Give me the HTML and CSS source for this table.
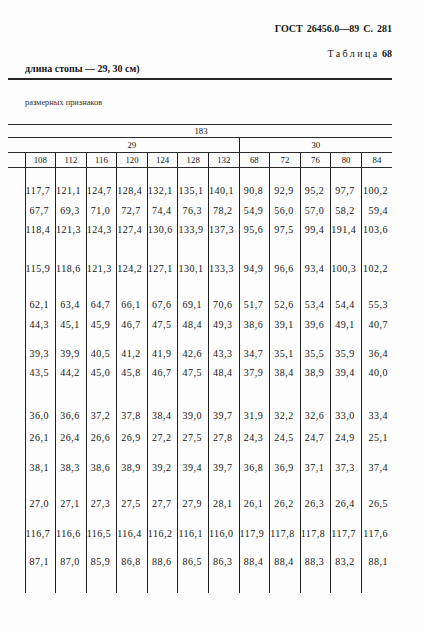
FILE: index.html
```html
<!DOCTYPE html>
<html lang="ru">
<head>
<meta charset="utf-8">
<title>ГОСТ 26456.0—89 С. 281</title>
<link rel="stylesheet" href="styles.css">
</head>
<body>
<div class="page">
  <div class="runhead">ГОСТ 26456.0—89 С. 281</div>
  <div class="tabnum"><span class="spaced">Таблица</span> <b>68</b></div>
  <div class="caption">длина стопы — 29, 30 см)</div>
  <div class="rule"></div>
  <div class="subcap">размерных признаков</div>
  <table class="data">
    <colgroup>
      <col class="labelcol">
      <col><col><col><col><col><col><col><col><col><col><col><col>
    </colgroup>
    <thead>
      <tr class="h1"><th colspan="13">183</th></tr>
      <tr class="h2"><th colspan="8">29</th><th colspan="5" class="sep">30</th></tr>
      <tr class="h3"><th class="lab"></th><th>108</th><th>112</th><th>116</th><th>120</th><th>124</th><th>128</th><th>132</th><th>68</th><th>72</th><th>76</th><th>80</th><th>84</th></tr>
    </thead>
    <tbody>
      <tr><td class="lab"></td><td>117,7</td><td>121,1</td><td>124,7</td><td>128,4</td><td>132,1</td><td>135,1</td><td>140,1</td><td>90,8</td><td>92,9</td><td>95,2</td><td>97,7</td><td>100,2</td></tr>
      <tr><td class="lab"></td><td>67,7</td><td>69,3</td><td>71,0</td><td>72,7</td><td>74,4</td><td>76,3</td><td>78,2</td><td>54,9</td><td>56,0</td><td>57,0</td><td>58,2</td><td>59,4</td></tr>
      <tr><td class="lab"></td><td>118,4</td><td>121,3</td><td>124,3</td><td>127,4</td><td>130,6</td><td>133,9</td><td>137,3</td><td>95,6</td><td>97,5</td><td>99,4</td><td>191,4</td><td>103,6</td></tr>
      <tr><td class="lab"></td><td>115,9</td><td>118,6</td><td>121,3</td><td>124,2</td><td>127,1</td><td>130,1</td><td>133,3</td><td>94,9</td><td>96,6</td><td>93,4</td><td>100,3</td><td>102,2</td></tr>
      <tr><td class="lab"></td><td>62,1</td><td>63,4</td><td>64,7</td><td>66,1</td><td>67,6</td><td>69,1</td><td>70,6</td><td>51,7</td><td>52,6</td><td>53,4</td><td>54,4</td><td>55,3</td></tr>
      <tr><td class="lab"></td><td>44,3</td><td>45,1</td><td>45,9</td><td>46,7</td><td>47,5</td><td>48,4</td><td>49,3</td><td>38,6</td><td>39,1</td><td>39,6</td><td>49,1</td><td>40,7</td></tr>
      <tr><td class="lab"></td><td>39,3</td><td>39,9</td><td>40,5</td><td>41,2</td><td>41,9</td><td>42,6</td><td>43,3</td><td>34,7</td><td>35,1</td><td>35,5</td><td>35,9</td><td>36,4</td></tr>
      <tr><td class="lab"></td><td>43,5</td><td>44,2</td><td>45,0</td><td>45,8</td><td>46,7</td><td>47,5</td><td>48,4</td><td>37,9</td><td>38,4</td><td>38,9</td><td>39,4</td><td>40,0</td></tr>
      <tr><td class="lab"></td><td>36,0</td><td>36,6</td><td>37,2</td><td>37,8</td><td>38,4</td><td>39,0</td><td>39,7</td><td>31,9</td><td>32,2</td><td>32,6</td><td>33,0</td><td>33,4</td></tr>
      <tr><td class="lab"></td><td>26,1</td><td>26,4</td><td>26,6</td><td>26,9</td><td>27,2</td><td>27,5</td><td>27,8</td><td>24,3</td><td>24,5</td><td>24,7</td><td>24,9</td><td>25,1</td></tr>
      <tr><td class="lab"></td><td>38,1</td><td>38,3</td><td>38,6</td><td>38,9</td><td>39,2</td><td>39,4</td><td>39,7</td><td>36,8</td><td>36,9</td><td>37,1</td><td>37,3</td><td>37,4</td></tr>
      <tr><td class="lab"></td><td>27,0</td><td>27,1</td><td>27,3</td><td>27,5</td><td>27,7</td><td>27,9</td><td>28,1</td><td>26,1</td><td>26,2</td><td>26,3</td><td>26,4</td><td>26,5</td></tr>
      <tr><td class="lab"></td><td>116,7</td><td>116,6</td><td>116,5</td><td>116,4</td><td>116,2</td><td>116,1</td><td>116,0</td><td>117,9</td><td>117,8</td><td>117,8</td><td>117,7</td><td>117,6</td></tr>
      <tr><td class="lab"></td><td>87,1</td><td>87,0</td><td>85,9</td><td>86,8</td><td>88,6</td><td>86,5</td><td>86,3</td><td>88,4</td><td>88,4</td><td>88,3</td><td>83,2</td><td>88,1</td></tr>
      <tr class="filler"><td class="lab"></td><td></td><td></td><td></td><td></td><td></td><td></td><td></td><td></td><td></td><td></td><td></td><td></td></tr>
    </tbody>
  </table>
</div>
</body>
</html>
```
FILE: styles.css
```css
html, body {
  margin: 0;
  padding: 0;
  background: #fdfdfd;
}
body {
  width: 424px;
  height: 632px;
  overflow: hidden;
  color: #161616;
  font-family: "Liberation Serif", "DejaVu Serif", serif;
}
.page {
  padding: 0 32px 0 8px;
}
.runhead {
  margin-top: 22px;
  line-height: 14px;
  font-size: 10px;
  font-weight: bold;
  text-align: right;
  word-spacing: 1.5px;
}
.tabnum {
  margin-top: 11px;
  line-height: 14px;
  font-size: 10px;
  text-align: right;
}
.tabnum .spaced {
  letter-spacing: 2.4px;
}
.caption {
  margin-top: 1px;
  margin-left: 17px;
  line-height: 14px;
  font-size: 10px;
  font-weight: bold;
}
.rule {
  margin-top: 2px;
  border-top: 2px solid #262626;
}
.subcap {
  margin-top: 17px;
  margin-left: 17px;
  line-height: 12px;
  font-size: 8.4px;
  color: #333;
}
.data {
  margin-top: 15px;
  width: 384px;
  table-layout: fixed;
  border-collapse: collapse;
}
.labelcol {
  width: 17px;
}
.data th {
  padding: 0;
  font-weight: normal;
  font-size: 8.8px;
  text-align: center;
}
.data .h1 th {
  line-height: 12px;
  border-top: 1px solid #2a2a2a;
  border-bottom: 1px solid #2a2a2a;
  padding-left: 2px;
}
.data .h2 th {
  line-height: 14px;
  border-bottom: 1px solid #2a2a2a;
  padding-left: 17px;
}
.data .h2 th.sep {
  border-left: 1px solid #222;
  padding-left: 0;
}
.data .h3 th {
  line-height: 14px;
  border-bottom: 1px solid #2a2a2a;
  border-left: 1px solid #222;
}
.data .h3 th.lab,
.data td.lab {
  border-left: none;
}
.data td {
  padding: 0 6px 0 0;
  line-height: 12px;
  font-size: 10px;
  letter-spacing: 0.5px;
  text-align: right;
  white-space: nowrap;
  border-left: 1px solid #222;
  vertical-align: top;
}
.data td:last-child {
  padding-right: 4px;
}
.data tbody tr:nth-child(1) td { padding-top: 17px; }
.data tbody tr:nth-child(2) td { padding-top: 8px; }
.data tbody tr:nth-child(3) td { padding-top: 7px; }
.data tbody tr:nth-child(4) td { padding-top: 27px; }
.data tbody tr:nth-child(5) td { padding-top: 24px; }
.data tbody tr:nth-child(6) td { padding-top: 8px; }
.data tbody tr:nth-child(7) td { padding-top: 17px; }
.data tbody tr:nth-child(8) td { padding-top: 7px; }
.data tbody tr:nth-child(9) td { padding-top: 31px; }
.data tbody tr:nth-child(10) td { padding-top: 10px; }
.data tbody tr:nth-child(11) td { padding-top: 18px; }
.data tbody tr:nth-child(12) td { padding-top: 24px; }
.data tbody tr:nth-child(13) td { padding-top: 18px; }
.data tbody tr:nth-child(14) td { padding-top: 16px; }
.data tbody tr.filler td { padding-top: 0; height: 25px; }
```
